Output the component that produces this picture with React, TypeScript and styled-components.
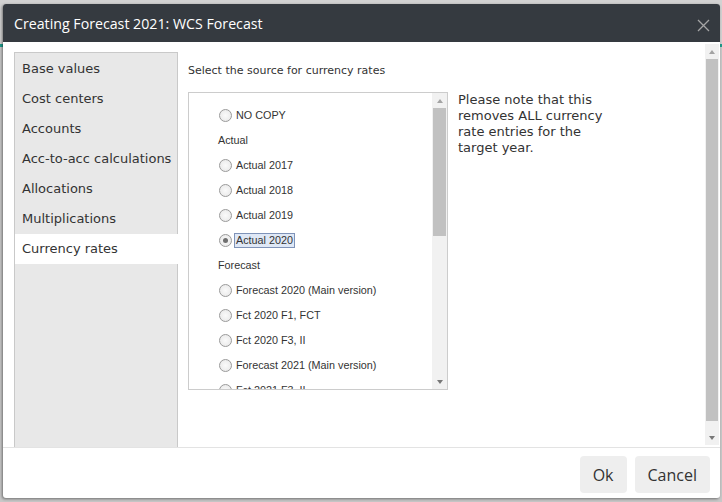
import styled, { createGlobalStyle } from "styled-components";

const GlobalStyle = createGlobalStyle`
    html, body {
        margin: 0;
        padding: 0;
        width: 722px;
        height: 502px;
        overflow: hidden;
        background: #cbcbcb;
        font-family: "DejaVu Sans", Verdana, sans-serif;
    }
`;

const Page = styled.div`
    position: relative;
    width: 722px;
    height: 502px;
    display: flex;
    flex-direction: column;
`;

const PageHeader = styled.div`
    height: 44px;
    background: #d2d2d2;
    border-bottom: 3px solid #1f9c8c;
`;

const PageBody = styled.div`
    flex: 1;
    background: #c8c8c8;
`;

const Dialog = styled.div`
    position: absolute;
    left: 3px;
    top: 4px;
    width: 717px;
    height: 494px;
    background: #fff;
    border-radius: 3px;
    box-shadow: -1px 1px 3px rgba(0, 0, 0, 0.45);
    display: flex;
    flex-direction: column;
    overflow: hidden;
`;

const Header = styled.div`
    height: 38px;
    flex-shrink: 0;
    background: #353a40;
    display: flex;
    align-items: center;
    justify-content: space-between;
    padding: 0 10px 0 11px;
`;

const Title = styled.h1`
    margin: 0;
    font-family: "Open Sans", sans-serif;
    font-weight: normal;
    font-size: 14.2px;
    color: #fff;
`;

const CloseButton = styled.div`
    width: 13px;
    height: 13px;
    margin-top: 4px;
    display: flex;
`;

const Body = styled.div`
    flex: 1;
    display: flex;
    min-height: 0;
`;

const Inner = styled.div`
    flex: 1;
    display: flex;
    padding: 10px 0 0 11px;
    min-height: 0;
`;

const Nav = styled.div`
    width: 162px;
    padding-top: 1px;
    background: #e8e8e8;
    border: 1px solid #c9c9c9;
    border-bottom: none;
    display: flex;
    flex-direction: column;
`;

const NavItem = styled.div<{ $active?: boolean }>`
    height: 30px;
    line-height: 30px;
    padding-left: 7px;
    margin-right: ${p => (p.$active ? "-1px" : "0")};
    background: ${p => (p.$active ? "#fff" : "transparent")};
    font-size: 13px;
    color: #333;
    white-space: nowrap;
`;

const Content = styled.div`
    flex: 1;
    padding-left: 10px;
    display: flex;
    flex-direction: column;
`;

const Hint = styled.div`
    margin-top: 12px;
    height: 14px;
    line-height: 14px;
    font-size: 11px;
    color: #333;
`;

const Row = styled.div`
    margin-top: 14px;
    display: flex;
    align-items: flex-start;
    gap: 10px;
`;

const ListBox = styled.div`
    width: 258px;
    height: 296px;
    border: 1px solid #cccccc;
    display: flex;
    overflow: hidden;
`;

const List = styled.div`
    flex: 1;
    padding: 10px 0 0 29px;
    overflow: hidden;
    font-family: "Liberation Sans", Tahoma, sans-serif;
    font-size: 10.8px;
    color: #333;
`;

const Group = styled.div`
    height: 25px;
    line-height: 25px;
`;

const Option = styled.label`
    height: 25px;
    display: flex;
    align-items: center;
    gap: 2px;
    white-space: nowrap;
`;

const Radio = styled.span<{ $checked?: boolean }>`
    width: 11px;
    height: 11px;
    margin-left: 1px;
    border-radius: 50%;
    border: 1px solid #9a9a9a;
    background: radial-gradient(circle, #fafafa 0%, #e6e6e6 100%);
    display: flex;
    align-items: center;
    justify-content: center;
    flex-shrink: 0;

    &::after {
        content: "";
        width: 5px;
        height: 5px;
        border-radius: 50%;
        background: ${p => (p.$checked ? "#6f6f6f" : "transparent")};
    }
`;

const OptionText = styled.span<{ $selected?: boolean }>`
    padding: 0 1px;
    line-height: 13px;
    border: 1px solid ${p => (p.$selected ? "#7f93b8" : "transparent")};
    background: ${p => (p.$selected ? "#dfe8f6" : "transparent")};
`;

const ScrollBar = styled.div<{ $width: number }>`
    width: ${p => p.$width}px;
    flex-shrink: 0;
    background: #f1f1f1;
    display: flex;
    flex-direction: column;
    align-items: center;
`;

const Arrow = styled.div<{ $down?: boolean }>`
    height: 15px;
    width: 100%;
    display: flex;
    align-items: center;
    justify-content: center;

    &::after {
        content: "";
        border-left: 3.5px solid transparent;
        border-right: 3.5px solid transparent;
        ${p =>
            p.$down
                ? "border-top: 4px solid #777;"
                : "border-bottom: 4px solid #a3a3a3;"}
    }
`;

const Thumb = styled.div<{ $height: number }>`
    width: calc(100% - 2px);
    height: ${p => p.$height}px;
    background: #c1c1c1;
`;

const Spacer = styled.div`
    flex: 1;
`;

const Note = styled.p`
    margin: 0;
    width: 162px;
    font-size: 13px;
    line-height: 16px;
    color: #333;
`;

const OuterScroll = styled(ScrollBar)`
    margin: 2px 1px 2px 0;
`;

const Footer = styled.div`
    height: 51px;
    flex-shrink: 0;
    border-top: 1px solid #e3e3e3;
    box-sizing: border-box;
    display: flex;
    justify-content: flex-end;
    align-items: flex-start;
    gap: 8px;
    padding: 8px 10px 0 0;
`;

const Button = styled.button`
    height: 37px;
    padding: 0 13px;
    border: none;
    border-radius: 4px;
    background: #eeeeee;
    color: #333;
    font-family: "Open Sans", sans-serif;
    font-size: 16px;
    cursor: pointer;
`;

type Entry = { kind: "group" | "option"; label: string; checked?: boolean };

const entries: Entry[] = [
    { kind: "option", label: "NO COPY" },
    { kind: "group", label: "Actual" },
    { kind: "option", label: "Actual 2017" },
    { kind: "option", label: "Actual 2018" },
    { kind: "option", label: "Actual 2019" },
    { kind: "option", label: "Actual 2020", checked: true },
    { kind: "group", label: "Forecast" },
    { kind: "option", label: "Forecast 2020 (Main version)" },
    { kind: "option", label: "Fct 2020 F1, FCT" },
    { kind: "option", label: "Fct 2020 F3, II" },
    { kind: "option", label: "Forecast 2021 (Main version)" },
    { kind: "option", label: "Fct 2021 F3, II" },
];

const navItems = [
    "Base values",
    "Cost centers",
    "Accounts",
    "Acc-to-acc calculations",
    "Allocations",
    "Multiplications",
    "Currency rates",
];

function App() {
    return (
        <>
            <GlobalStyle />
            <Page>
                <PageHeader />
                <PageBody />
                <Dialog>
                    <Header>
                        <Title>Creating Forecast 2021: WCS Forecast</Title>
                        <CloseButton>
                            <svg width="13" height="13" viewBox="0 0 13 13">
                                <path d="M1 1 L12 12 M12 1 L1 12" stroke="#a5a5a5" strokeWidth="1.3" fill="none" />
                            </svg>
                        </CloseButton>
                    </Header>
                    <Body>
                        <Inner>
                            <Nav>
                                {navItems.map(item => (
                                    <NavItem key={item} $active={item === "Currency rates"}>
                                        {item}
                                    </NavItem>
                                ))}
                            </Nav>
                            <Content>
                                <Hint>Select the source for currency rates</Hint>
                                <Row>
                                    <ListBox>
                                        <List>
                                            {entries.map(e =>
                                                e.kind === "group" ? (
                                                    <Group key={e.label}>{e.label}</Group>
                                                ) : (
                                                    <Option key={e.label}>
                                                        <Radio $checked={e.checked} />
                                                        <OptionText $selected={e.checked}>{e.label}</OptionText>
                                                    </Option>
                                                )
                                            )}
                                        </List>
                                        <ScrollBar $width={15}>
                                            <Arrow />
                                            <Thumb $height={128} />
                                            <Spacer />
                                            <Arrow $down />
                                        </ScrollBar>
                                    </ListBox>
                                    <Note>
                                        Please note that this removes ALL currency rate entries for the target year.
                                    </Note>
                                </Row>
                            </Content>
                        </Inner>
                        <OuterScroll $width={14}>
                            <Arrow />
                            <Thumb $height={362} />
                            <Spacer />
                            <Arrow $down />
                        </OuterScroll>
                    </Body>
                    <Footer>
                        <Button>Ok</Button>
                        <Button>Cancel</Button>
                    </Footer>
                </Dialog>
            </Page>
        </>
    );
}

export default App;
